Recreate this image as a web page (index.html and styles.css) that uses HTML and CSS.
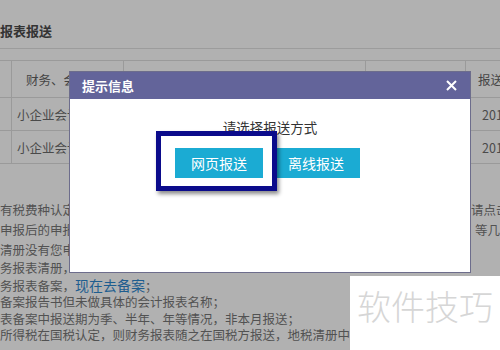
FILE: index.html
```html
<!DOCTYPE html>
<html lang="zh-CN">
<head>
    <meta charset="UTF-8">
    <meta name="viewport" content="width=device-width, initial-scale=1.0">
    <title>报表报送</title>
    <link rel="stylesheet" href="styles.css">
</head>
<body>
    <div class="page">
        <p class="head">报表报送</p>
        <table class="grid">
            <tr>
                <th class="c0"></th>
                <th class="c1">财务、会计制度</th>
                <th class="c2"></th>
                <th class="c3"></th>
                <th class="c4">报送日期</th>
            </tr>
            <tr>
                <td></td>
                <td class="name">小企业会计准则</td>
                <td></td>
                <td></td>
                <td class="date">2017-01-01</td>
            </tr>
            <tr>
                <td></td>
                <td class="name">小企业会计准则</td>
                <td></td>
                <td></td>
                <td class="date">2017-01-01</td>
            </tr>
        </table>
        <div class="notes">
            <div class="line tall"><span>有税费种认定</span><span class="right">请点击</span></div>
            <div class="line tall"><span>申报后的申报</span><span class="right r2">等几</span></div>
            <div class="line tall"><span>清册没有您申</span></div>
            <div class="line"><span>务报表清册，</span></div>
            <div class="line"><span>务报表备案，<a href="#" class="link">现在去备案</a>；</span></div>
            <div class="line"><span>备案报告书但未做具体的会计报表名称；</span></div>
            <div class="line"><span>表备案中报送期为季、半年、年等情况，非本月报送；</span></div>
            <div class="line"><span>所得税在国税认定，则财务报表随之在国税方报送，地税清册中</span></div>
        </div>
    </div>

    <div class="dialog">
        <div class="dialog-head">
            <span>提示信息</span>
            <svg class="close" width="11" height="11" viewBox="0 0 11 11">
                <path d="M1 1 L10 10 M10 1 L1 10" stroke="#fff" stroke-width="2" fill="none"/>
            </svg>
        </div>
        <div class="dialog-body">
            <p class="ask">请选择报送方式</p>
            <div class="buttons">
                <button class="btn marked">网页报送</button>
                <button class="btn">离线报送</button>
            </div>
        </div>
    </div>

    <div class="watermark">软件技巧</div>
</body>
</html>
```

FILE: styles.css
```css
body {
    font-family: "Noto Sans CJK SC", "Liberation Sans", sans-serif;
    margin: 0;
    width: 500px;
    height: 350px;
    overflow: hidden;
    background-color: #b1b1b1;
    color: #4f4f4f;
    position: relative;
}
.page {
    width: 500px;
}
.head {
    margin: 0;
    height: 49px;
    line-height: 62px;
    font-size: 13px;
    font-weight: bold;
    color: #333;
    border-bottom: 1px solid #9c9c9c;
    box-sizing: border-box;
}
.grid {
    margin-top: 11px;
    margin-left: -2px;
    border-collapse: collapse;
    table-layout: fixed;
    width: 567px;
    font-size: 12.5px;
}
.grid th,
.grid td {
    box-sizing: border-box;
    border: 1px solid #9a9a9a;
    padding: 0;
    text-align: left;
    white-space: nowrap;
    overflow: hidden;
}
.grid th {
    height: 37px;
    font-weight: normal;
    color: #444;
}
.grid td {
    height: 33px;
    color: #4a4a4a;
}
.c0 { width: 13px; }
.c1 { width: 112px; padding-left: 14px !important; }
.c2 { width: 242px; }
.c3 { width: 100px; }
.c4 { width: 100px; padding-left: 12px !important; }
.name {
    padding-left: 5px !important;
}
.date {
    padding-left: 16px !important;
}
.notes {
    margin-top: 36px;
    font-size: 12.5px;
    color: #525252;
}
.line {
    display: flex;
    white-space: nowrap;
    line-height: 16.5px;
}
.line.tall {
    line-height: 20px;
}
.right {
    margin-left: auto;
    width: 29px;
    overflow: hidden;
}
.r2 {
    padding-left: 4px;
    width: 25px;
}
.link {
    color: #1d5d8f;
    font-size: 14px;
    text-decoration: none;
}
.dialog {
    position: absolute;
    left: 69px;
    top: 71px;
    width: 402px;
    height: 202px;
    box-sizing: border-box;
    background-color: #fff;
    border: 1px solid #6d6d8c;
}
.dialog-head {
    height: 27px;
    background-color: #63649a;
    color: #fff;
    font-size: 13px;
    font-weight: bold;
    display: flex;
    align-items: center;
    justify-content: space-between;
    padding: 0 13px 0 12px;
}
.dialog-body {
    text-align: center;
    padding-top: 19px;
}
.ask {
    margin: 0;
    font-size: 13.5px;
    line-height: 18px;
    color: #333;
}
.buttons {
    display: flex;
    justify-content: center;
    gap: 9px;
    margin-top: 12px;
    padding-right: 5px;
}
.btn {
    width: 88px;
    height: 30px;
    border: none;
    background-color: #1babd3;
    color: #fff;
    font-family: inherit;
    font-size: 14px;
    padding: 0;
}
.marked {
    position: relative;
}
.marked::after {
    content: "";
    position: absolute;
    top: -17px;
    left: -19px;
    right: -14px;
    bottom: -13px;
    border: 5px solid #0b0b8b;
    box-shadow: 2px 3px 4px rgba(0, 0, 0, 0.45);
}
.watermark {
    position: absolute;
    right: 0;
    bottom: 0;
    width: 150px;
    height: 74px;
    background-color: #fff;
    color: #d6d6d6;
    font-size: 34px;
    font-weight: 300;
    line-height: 60px;
    text-align: center;
}
```
